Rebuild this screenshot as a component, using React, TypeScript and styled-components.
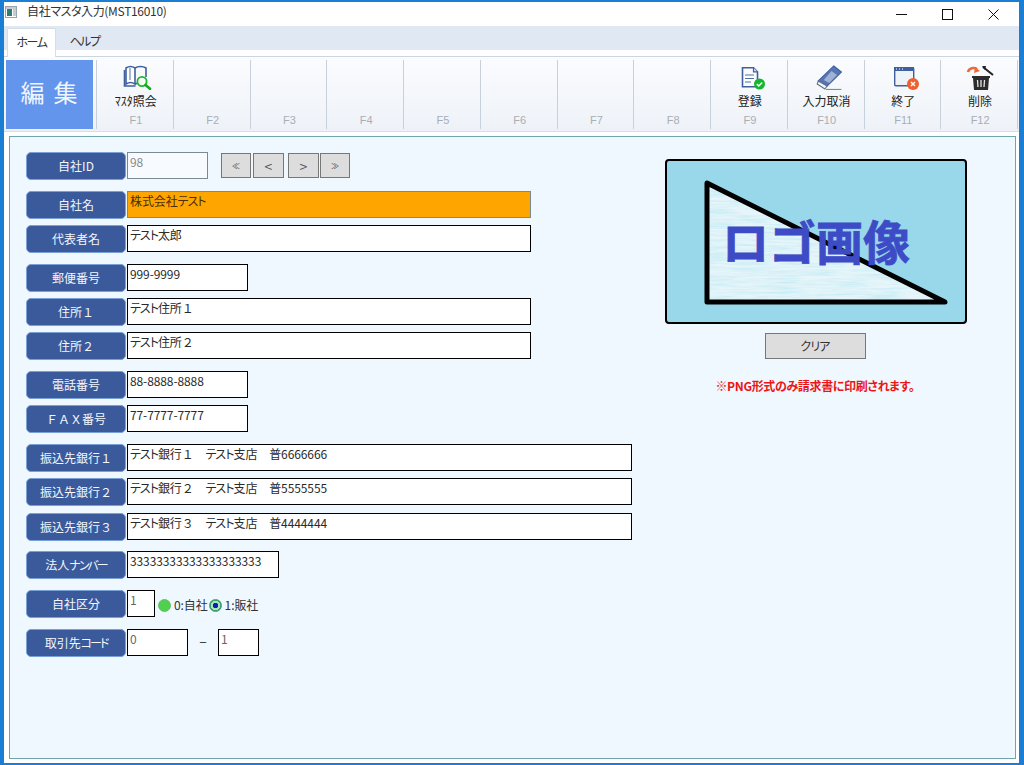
import React from "react";
import styled, { createGlobalStyle } from "styled-components";

const Global = createGlobalStyle`
  html, body { margin: 0; padding: 0; background: #fff; }
  body { font-family: "Noto Sans CJK JP", "Liberation Sans", sans-serif; }
  * { box-sizing: border-box; }
`;

const Kana = styled.span`
  font-feature-settings: "palt";
  letter-spacing: -0.1px;
`;

const Txt = ({ children }: { children: string }) => (
  <>
    {children.split(/([ァ-ヶー]+)/).map((part, i) =>
      i % 2 === 1 ? <Kana key={i}>{part}</Kana> : <React.Fragment key={i}>{part}</React.Fragment>
    )}
  </>
);

const Window = styled.div`
  width: 1024px;
  height: 765px;
  overflow: hidden;
  display: flex;
  flex-direction: column;
  background: #fff;
  border-style: solid;
  border-color: #1a7fd4;
  border-width: 2px 5px 2px 4px;
  font-size: 12px;
  line-height: 16px;
  color: #222;
`;

const TitleBar = styled.div`
  height: 24px;
  flex: none;
  display: flex;
  align-items: flex-start;
  padding-left: 1px;
  background: #fff;
`;

const AppIconBox = styled.div`
  margin-top: 4px;
  height: 12px;
  display: flex;
`;

const TitleText = styled.span`
  margin: 1px 0 0 10px;
  color: #333;
  letter-spacing: -0.3px;
  ${Kana} { letter-spacing: -0.5px; }
`;

const WindowButtons = styled.div`
  margin-left: auto;
  display: flex;
  margin-right: 3px;
`;

const WindowButton = styled.div`
  width: 46px;
  height: 24px;
  display: flex;
  align-items: center;
  justify-content: center;
`;

const TabStrip = styled.div`
  height: 24px;
  flex: none;
  background: #dfe8f3;
  display: flex;
  align-items: flex-start;
  padding: 2px 0 0 3px;
  position: relative;
  z-index: 1;
`;

const Tab = styled.div<{ $active?: boolean }>`
  width: 49px;
  height: 29px;
  margin-right: ${(p) => (p.$active ? "4px" : "0")};
  padding-top: 5px;
  text-align: center;
  color: #333;
  background: ${(p) => (p.$active ? "#fff" : "transparent")};
  border: ${(p) => (p.$active ? "1px solid #d5dde8" : "none")};
  border-bottom: none;
  border-radius: 2px 2px 0 0;
  ${Kana} { letter-spacing: -1.5px; }
`;

const Spacer = styled.div`
  height: 7px;
  flex: none;
  background: #fff;
  border-bottom: 1px solid #ccd6e2;
`;

const Ribbon = styled.div`
  height: 75px;
  flex: none;
  display: flex;
  padding: 3px 1px 2px 2px;
  background: linear-gradient(#fbfcfe, #eef2f8);
  border-bottom: 1px solid #d9dfe8;
`;

const EditBlock = styled.div`
  width: 87px;
  height: 69px;
  flex: none;
  background: #6495ed;
  color: #f1f5ff;
  font-size: 24px;
  line-height: 64px;
  letter-spacing: 9px;
  text-align: center;
  padding-left: 8px;
  font-weight: 400;
`;

const Keys = styled.div`
  flex: 1;
  display: grid;
  grid-template-columns: repeat(12, 1fr);
  margin-left: 3px;
  border-left: 1px solid #c8d0db;
  height: 69px;
`;

const Key = styled.div`
  display: flex;
  flex-direction: column;
  align-items: center;
  border-right: 1px solid #c8d0db;
  height: 69px;
  padding-left: 2px;
`;

const KeyIcon = styled.div`
  height: 27px;
  margin-top: 3px;
  display: flex;
  align-items: flex-end;
  justify-content: center;
`;

const KeyLabel = styled.div`
  height: 17px;
  line-height: 17px;
  margin-top: 2px;
  color: #222;
  white-space: nowrap;
  font-size: 12px;
`;

const KeyName = styled.div`
  margin-top: auto;
  margin-bottom: 2px;
  color: #a9aeb5;
  font-size: 11px;
  line-height: 14px;
  font-family: "Liberation Sans", sans-serif;
`;

const Panel = styled.div`
  flex: 1;
  margin: 4px 3px 4px 5px;
  background: #f0f8ff;
  border: 1px solid #6fa5ad;
  padding: 15px 0 0 16px;
  display: flex;
`;

const FormColumn = styled.div`
  width: 639px;
  flex: none;
  display: flex;
  flex-direction: column;
`;

const Row = styled.div<{ $gap: number }>`
  display: flex;
  align-items: flex-start;
  height: 28px;
  margin-top: ${(p) => p.$gap}px;
`;

const Label = styled.div`
  width: 100px;
  height: 28px;
  flex: none;
  margin-right: 1px;
  background: #3a5a9c;
  border: 1px solid #7ba0d6;
  border-radius: 5px;
  color: #f4f6fb;
  display: flex;
  align-items: center;
  justify-content: center;
  ${Kana} { letter-spacing: -2px; }
`;

const Field = styled.div<{ $w: number; $tone?: "plain" | "orange" | "ro" }>`
  width: ${(p) => p.$w}px;
  height: 27px;
  flex: none;
  padding: 1px 2px 0;
  line-height: 16px;
  white-space: pre;
  overflow: hidden;
  letter-spacing: -0.1px;
  border: 1px solid ${(p) => (p.$tone === "orange" || p.$tone === "ro" ? "#7a8a92" : "#000")};
  background: ${(p) => (p.$tone === "orange" ? "#ffa500" : p.$tone === "ro" ? "#f7fbff" : "#fff")};
  color: ${(p) => (p.$tone === "ro" ? "#888" : p.$tone === "orange" ? "#4a3000" : "#2a2a2a")};
  ${Kana} { letter-spacing: -1px; }
`;

const Muted = styled.span`
  color: #666;
`;

const NavGroup = styled.div`
  display: flex;
  margin-left: 13px;
  margin-top: 1px;
`;

const NavButton = styled.div<{ $w: number; $after: number; $small?: boolean }>`
  width: ${(p) => p.$w}px;
  height: 25px;
  margin-right: ${(p) => p.$after}px;
  background: #dddddd;
  border: 1px solid #777;
  display: flex;
  align-items: center;
  justify-content: center;
  color: #555;
  font-size: ${(p) => (p.$small ? "8px" : "14px")};
`;

const Radios = styled.div`
  display: flex;
  align-items: center;
  height: 28px;
  margin-left: 3px;
  margin-top: 1px;
  font-size: 12px;
  color: #333;
`;

const Radio = styled.span<{ $on?: boolean }>`
  width: 13px;
  height: 13px;
  border-radius: 50%;
  margin-right: 3px;
  flex: none;
  background: ${(p) =>
    p.$on
      ? "radial-gradient(circle, #0b1fb0 0 2.5px, #a9e4c0 3px 4.5px, #3f9f6f 5px)"
      : "#4fd04f"};
  border: 1px solid ${(p) => (p.$on ? "#3f9f6f" : "#6bbf6b")};
`;

const RadioText = styled.span`
  margin-right: 1px;
  letter-spacing: -0.1px;
`;

const Dash = styled.span`
  width: 30px;
  text-align: center;
  line-height: 22px;
  font-size: 14px;
  color: #333;
`;

const SideColumn = styled.div`
  width: 302px;
  flex: none;
  padding-top: 7px;
  display: flex;
  flex-direction: column;
  align-items: center;
`;

const LogoFrame = styled.div`
  width: 302px;
  height: 165px;
  border: 2px solid #000;
  border-radius: 4px;
  background: #98d8ea;
  overflow: hidden;
`;

const ClearButton = styled.div`
  width: 101px;
  height: 26px;
  margin: 9px 2px 0 0;
  background: #dddddd;
  border: 1px solid #777;
  display: flex;
  align-items: center;
  justify-content: center;
  color: #333;
  ${Kana} { letter-spacing: -0.8px; }
`;

const Note = styled.div`
  margin: 19px 2px 0 0;
  color: #ea1616;
  font-weight: 700;
  font-size: 12px;
  line-height: 16px;
  letter-spacing: -0.35px;
  font-feature-settings: "palt";
`;

const AppIcon = () => (
  <svg width="12" height="12" viewBox="0 0 12 12">
    <rect x="0.5" y="0.5" width="11" height="11" fill="#fff" stroke="#9aa3ad" />
    <rect x="1" y="1" width="10" height="2" fill="#c8ccd2" />
    <rect x="2" y="3" width="5" height="7" fill="#2f7f70" />
    <rect x="8" y="3" width="3" height="7" fill="#c4ccd4" />
  </svg>
);

const BookIcon = () => (
  <svg width="34" height="26" viewBox="0 0 34 26">
    <path d="M7 20V4c3-2 6-2 9 0v16c-3-2-6-2-9 0z" fill="#fff" stroke="#3f5f9f" strokeWidth="1.6" />
    <path d="M16 4c3-2 8-2 11 0v9M16 20c2-1 3-1 5-1" fill="none" stroke="#3f5f9f" strokeWidth="1.6" />
    <path d="M5.5 6v16h11" fill="none" stroke="#3f5f9f" strokeWidth="1.6" />
    <path d="M11 4v12" stroke="#a8b6d2" strokeWidth="2" />
    <circle cx="23" cy="17.5" r="4.6" fill="#f4fff4" stroke="#1cb82c" strokeWidth="1.8" />
    <path d="M26.5 21l4.5 3.8" stroke="#14a824" strokeWidth="2.6" strokeLinecap="round" />
  </svg>
);

const DocIcon = () => (
  <svg width="30" height="26" viewBox="0 0 30 26">
    <path d="M7.5 3.8h11l4 4v15h-15z" fill="#fbfcff" stroke="#3f5f9f" strokeWidth="1.6" />
    <path d="M18.5 3.8v4h4" fill="#dbe3f2" stroke="#3f5f9f" strokeWidth="1.2" />
    <path d="M10 11h9M10 14.5h9M10 18h6" stroke="#55709f" strokeWidth="1.2" />
    <circle cx="24.5" cy="20" r="5.5" fill="#12b82c" />
    <path d="M21.8 20l2 2 3.4-3.6" fill="none" stroke="#fff" strokeWidth="1.5" />
  </svg>
);

const EraserIcon = () => (
  <svg width="30" height="27" viewBox="0 0 30 27">
    <g transform="translate(3,2) scale(1.1,1)">
      <path d="M17 1l7 6-13 14-8-5z" fill="#5876b4" stroke="#3f5f9f" />
      <path d="M15 6l5 4-7 8-5-3z" fill="#9fb2d6" />
      <path d="M3 16l8 5-2 3-7-5z" fill="#f6f8fb" stroke="#5f6f8c" />
      <path d="M10 24.5h14" stroke="#7b8aa4" strokeWidth="1.2" />
    </g>
  </svg>
);

const CloseIcon = () => (
  <svg width="32" height="26" viewBox="0 0 32 26">
    <rect x="7.7" y="3.7" width="19" height="18" rx="1" fill="#eef2f9" stroke="#3f5f9f" strokeWidth="1.4" />
    <rect x="7" y="3" width="20" height="4" fill="#3f5f9f" />
    <path d="M9 5h1M12 5h1M15 5h1" stroke="#fff" />
    <circle cx="26" cy="20" r="6" fill="#ee6030" />
    <path d="M24 18l4 4M28 18l-4 4" stroke="#fff" strokeWidth="1.4" />
  </svg>
);

const TrashIcon = () => (
  <svg width="30" height="27" viewBox="0 0 30 27">
    <path d="M3 9c1-4 6-5 9-3" fill="none" stroke="#ee6a35" strokeWidth="2.6" />
    <path d="M10 4l5 4-6 2z" fill="#ee6a35" />
    <path d="M18 4l10 8" stroke="#222" strokeWidth="2" />
    <path d="M17 3l4 0-1 4z" fill="#222" />
    <path d="M7 13h18v2h-1l-1 12H9L8 15H7z" fill="#2c2c2c" />
    <path d="M12.5 17l.5 7M16 17v7M19.5 17l-.5 7" stroke="#e8e8e8" strokeWidth="1.3" />
  </svg>
);

const LogoArt = () => (
  <svg width="298" height="161" viewBox="0 0 298 161">
    <defs>
      <filter id="paper" x="0" y="0" width="100%" height="100%">
        <feTurbulence type="fractalNoise" baseFrequency="0.03 0.45" numOctaves="3" seed="4" />
        <feColorMatrix values="0 0 0 0 0.6  0 0 0 0 0.85  0 0 0 0 0.92  2.4 0 0 0 -0.85" />
        <feComposite in2="SourceGraphic" operator="in" />
        <feMerge>
          <feMergeNode in="SourceGraphic" />
          <feMergeNode />
        </feMerge>
      </filter>
    </defs>
    <path d="M40 22V141H278Z" fill="#e6f5f9" filter="url(#paper)" />
    <path d="M40 22V141H278Z" fill="none" stroke="#000" strokeWidth="5" strokeLinejoin="round" />
    <text
      x="149"
      y="99"
      textAnchor="middle"
      fontFamily="'Noto Sans CJK JP', sans-serif"
      fontWeight="700"
      fontSize="47"
      fill="#3d4cc6"
      stroke="#3d4cc6"
      strokeWidth="0.8"
    >
      ロゴ画像
    </text>
  </svg>
);

type FieldDef = { value: string; w: number; tone?: "plain" | "orange" | "ro" };
const rows: { label: string; gap: number; field: FieldDef }[] = [
  { label: "自社名", gap: 11, field: { value: "株式会社テスト", w: 404, tone: "orange" } },
  { label: "代表者名", gap: 6, field: { value: "テスト太郎", w: 404 } },
  { label: "郵便番号", gap: 11, field: { value: "999-9999", w: 121 } },
  { label: "住所１", gap: 6, field: { value: "テスト住所１", w: 404 } },
  { label: "住所２", gap: 6, field: { value: "テスト住所２", w: 404 } },
  { label: "電話番号", gap: 11, field: { value: "88-8888-8888", w: 121 } },
  { label: "ＦＡＸ番号", gap: 6, field: { value: "77-7777-7777", w: 121 } },
  { label: "振込先銀行１", gap: 11, field: { value: "テスト銀行１　テスト支店　普6666666", w: 505 } },
  { label: "振込先銀行２", gap: 6, field: { value: "テスト銀行２　テスト支店　普5555555", w: 505 } },
  { label: "振込先銀行３", gap: 7, field: { value: "テスト銀行３　テスト支店　普4444444", w: 505 } },
  { label: "法人ナンバー", gap: 10, field: { value: "33333333333333333333", w: 152 } },
];

const keys: { name: string; label?: string; icon?: React.ReactNode }[] = [
  { name: "F1", label: "ﾏｽﾀ照会", icon: <BookIcon /> },
  { name: "F2" },
  { name: "F3" },
  { name: "F4" },
  { name: "F5" },
  { name: "F6" },
  { name: "F7" },
  { name: "F8" },
  { name: "F9", label: "登録", icon: <DocIcon /> },
  { name: "F10", label: "入力取消", icon: <EraserIcon /> },
  { name: "F11", label: "終了", icon: <CloseIcon /> },
  { name: "F12", label: "削除", icon: <TrashIcon /> },
];

export default function App() {
  return (
    <>
      <Global />
      <Window>
        <TitleBar>
          <AppIconBox>
            <AppIcon />
          </AppIconBox>
          <TitleText>
            <Txt>自社マスタ入力(MST16010)</Txt>
          </TitleText>
          <WindowButtons>
            <WindowButton>
              <svg width="11" height="11" viewBox="0 0 11 11">
                <path d="M0 5.5h11" stroke="#111" />
              </svg>
            </WindowButton>
            <WindowButton>
              <svg width="11" height="11" viewBox="0 0 11 11">
                <rect x="0.5" y="0.5" width="10" height="10" fill="none" stroke="#111" />
              </svg>
            </WindowButton>
            <WindowButton>
              <svg width="11" height="11" viewBox="0 0 11 11">
                <path d="M0.5 0.5l10 10M10.5 0.5l-10 10" stroke="#111" />
              </svg>
            </WindowButton>
          </WindowButtons>
        </TitleBar>
        <TabStrip>
          <Tab $active>
            <Txt>ホーム</Txt>
          </Tab>
          <Tab>
            <Txt>ヘルプ</Txt>
          </Tab>
        </TabStrip>
        <Spacer />
        <Ribbon>
          <EditBlock>編集</EditBlock>
          <Keys>
            {keys.map((k) => (
              <Key key={k.name}>
                <KeyIcon>{k.icon}</KeyIcon>
                <KeyLabel>{k.label}</KeyLabel>
                <KeyName>{k.name}</KeyName>
              </Key>
            ))}
          </Keys>
        </Ribbon>
        <Panel>
          <FormColumn>
            <Row $gap={0}>
              <Label>自社ID</Label>
              <Field $w={81} $tone="ro">98</Field>
              <NavGroup>
                <NavButton $w={30} $after={2} $small>≪</NavButton>
                <NavButton $w={31} $after={4}>&lt;</NavButton>
                <NavButton $w={31} $after={1}>&gt;</NavButton>
                <NavButton $w={30} $after={0} $small>≫</NavButton>
              </NavGroup>
            </Row>
            {rows.map((r) => (
              <Row key={r.label} $gap={r.gap}>
                <Label>
                  <Txt>{r.label}</Txt>
                </Label>
                <Field $w={r.field.w} $tone={r.field.tone}>
                  <Txt>{r.field.value}</Txt>
                </Field>
              </Row>
            ))}
            <Row $gap={11}>
              <Label>自社区分</Label>
              <Field $w={28}><Muted>1</Muted></Field>
              <Radios>
                <Radio />
                <RadioText>0:自社</RadioText>
                <Radio $on />
                <RadioText>1:販社</RadioText>
              </Radios>
            </Row>
            <Row $gap={11}>
              <Label>
                <Txt>取引先コード</Txt>
              </Label>
              <Field $w={61}><Muted>0</Muted></Field>
              <Dash>–</Dash>
              <Field $w={41}><Muted>1</Muted></Field>
            </Row>
          </FormColumn>
          <SideColumn>
            <LogoFrame>
              <LogoArt />
            </LogoFrame>
            <ClearButton>
              <Txt>クリア</Txt>
            </ClearButton>
            <Note>※PNG形式のみ請求書に印刷されます。</Note>
          </SideColumn>
        </Panel>
      </Window>
    </>
  );
}
